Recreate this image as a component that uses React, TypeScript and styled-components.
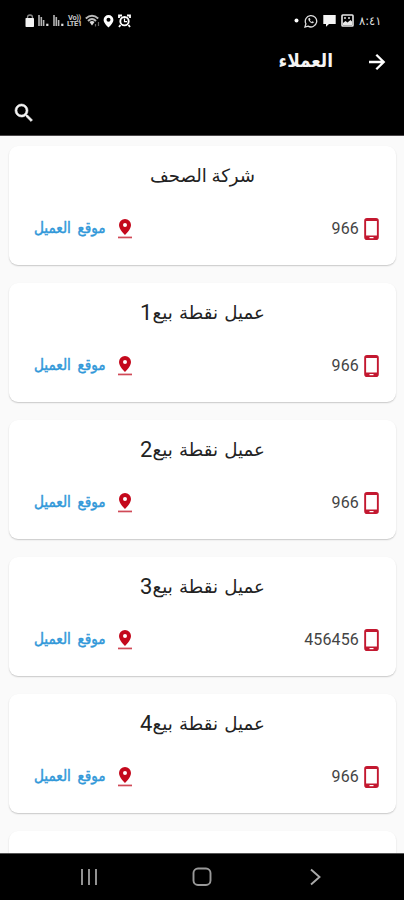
import React from "react";
import styled, { createGlobalStyle } from "styled-components";

const GlobalStyle = createGlobalStyle`
  * { box-sizing: border-box; }
  body { margin: 0; background: #fafafa; overflow: hidden; }
`;

const Screen = styled.div`
  direction: rtl;
  width: 404px;
  height: 900px;
  display: flex;
  flex-direction: column;
  overflow: hidden;
  background: #fafafa;
  font-family: Roboto, "DejaVu Sans", sans-serif;
`;

const Header = styled.header`
  flex: none;
  height: 136px;
  background: #000;
  color: #f4f4f4;
  border-bottom: 1px solid #4b484a;
`;

const StatusBar = styled.div`
  direction: ltr;
  height: 40px;
  padding: 1px 24px 0 25px;
  display: flex;
  align-items: center;
  justify-content: space-between;
`;

const StatusGroup = styled.div<{ $gap: number }>`
  display: flex;
  align-items: center;
  gap: ${(p) => p.$gap}px;
  svg { display: block; }
`;

const Network = styled.div`
  width: 15px;
  font-size: 7.5px;
  line-height: 6px;
  font-weight: 700;
  text-align: center;
  letter-spacing: -0.4px;
  color: #c8c8c8;
`;

const Clock = styled.span`
  width: 21px;
  font-family: "DejaVu Sans", sans-serif;
  font-size: 11.5px;
  line-height: 14px;
  letter-spacing: -0.8px;
  direction: ltr;
  unicode-bidi: bidi-override;
  white-space: nowrap;
  color: #ddd;
`;

const TitleBar = styled.div`
  height: 44px;
  padding-right: 18px;
  display: flex;
  align-items: center;
  gap: 35px;
  svg { display: block; }
`;

const PageTitle = styled.h1`
  margin: 0;
  padding-bottom: 2px;
  font-family: "DejaVu Sans Condensed", "DejaVu Sans", sans-serif;
  font-size: 18.8px;
  line-height: 24px;
  font-weight: 700;
  white-space: nowrap;
`;

const SearchBar = styled.div`
  height: 51px;
  padding: 17px 0 0 12px;
  display: flex;
  justify-content: flex-end;
`;

const List = styled.main`
  flex: 1;
  min-height: 0;
  overflow: hidden;
  padding: 10px 8px 0 9px;
  display: flex;
  flex-direction: column;
  gap: 18px;
`;

const Card = styled.article`
  flex: none;
  height: 119px;
  padding: 16px 17px 0 25px;
  border-radius: 9px;
  background: #fff;
  box-shadow: 0 1px 1.5px rgba(0, 0, 0, 0.2);
`;

const CustomerName = styled.h2`
  margin: 0;
  height: 28px;
  padding-right: 8px;
  display: flex;
  justify-content: center;
  align-items: center;
  font-size: 18.2px;
  line-height: 28px;
  font-weight: 400;
  white-space: pre;
  color: #222;

  ${Card}:last-child & {
    padding-bottom: 1px;
    line-height: 27px;
  }
`;

const NameText = styled.span<{ $numbered: boolean }>`
  word-spacing: ${(p) => (p.$numbered ? 1.8 : 0)}px;
`;

const Digit = styled.span`
  font-size: 22px;
`;

const CardRow = styled.div`
  height: 24px;
  margin-top: 27px;
  display: flex;
  align-items: center;
  justify-content: space-between;
`;

const Phone = styled.div`
  display: flex;
  align-items: center;
  gap: 5px;
  font-size: 16px;
  letter-spacing: 0.15px;
  color: #444;
  svg { display: block; }
`;

const PhoneNumber = styled.span`
  padding-bottom: 2px;
`;

const LocationLink = styled.a`
  display: flex;
  align-items: center;
  gap: 12.5px;
  font-family: "DejaVu Sans Condensed", "DejaVu Sans", sans-serif;
  font-size: 15.2px;
  word-spacing: 2.2px;
  line-height: 20px;
  white-space: nowrap;
  color: #3198d9;
  -webkit-text-stroke: 0.45px #3198d9;
  svg { display: block; }
`;

const LinkText = styled.span`
  padding-bottom: 2px;
`;

const NavBar = styled.nav`
  direction: ltr;
  flex: none;
  height: 47px;
  border-top: 1px solid #555;
  background: #000;
  display: flex;
  align-items: center;
  justify-content: space-between;
  padding: 0 81px 0 80px;
  svg { display: block; }
`;

const HomeButton = styled.span`
  margin-right: 3px;
`;

const LockIcon = () => (
  <svg width="10" height="14" viewBox="0 0 10 14">
    <path d="M2.500 5V3.500a2.500 2.500 0 0 1 5 0V5" fill="none" stroke="#888" strokeWidth="1.3" />
    <rect x="0.5" y="4" width="8.5" height="9" rx="0.8" fill="#f3f3f3" />
  </svg>
);

const SignalIcon = () => (
  <svg width="11" height="13" viewBox="0 0 11 13">
    <path d="M1 1v11M3.300 3v9M5.600 6v6" stroke="#b5b5b5" strokeWidth="1.6" />
    <rect x="8.200" y="9.700" width="2.200" height="2.300" fill="#ddd" />
  </svg>
);

const WifiIcon = () => (
  <svg width="15" height="14" viewBox="0 0 15 14">
    <path d="M.8 4.500Q7 -1 13.200 4.500M3 7Q7 3 11 7" fill="none" stroke="#bbb" strokeWidth="1.900" />
    <path d="M4.500 8Q7 6 9.500 8L7 11.500z" fill="#ddd" />
    <path d="M10.500 12.500V10M13.500 8v4" stroke="#666" strokeWidth="1.2" />
  </svg>
);

const StatusPinIcon = () => (
  <svg width="11" height="14" viewBox="0 0 11 14">
    <path fillRule="evenodd" d="M5.500 1a4.900 4.900 0 0 0-4.900 4.900C.6 9 5.500 13.400 5.500 13.400S10.400 9 10.400 5.900A4.900 4.900 0 0 0 5.500 1zm0 2.800a2 2 0 1 1 0 4 2 2 0 0 1 0-4z" fill="#fff" />
  </svg>
);

const AlarmIcon = () => (
  <svg width="13" height="14" viewBox="0 0 13 14">
    <path d="M1 4V1.500h3M9 1.500h3V4M2.500 11L1 13M10.500 11l1.500 2" stroke="#fff" strokeWidth="1.800" fill="none" />
    <circle cx="6.500" cy="7.200" r="4.200" fill="none" stroke="#fff" strokeWidth="1.900" />
    <path d="M6.500 4.500V7.600H9" stroke="#fff" fill="none" strokeWidth="1.200" />
  </svg>
);

const WhatsappIcon = () => (
  <svg width="14" height="14" viewBox="0 0 14 14">
    <path d="M1 13l.9-3.200A5.700 5.700 0 1 1 4 12.100z" fill="none" stroke="#ddd" strokeWidth="1.300" />
    <path d="M4.800 4c-.8.8-.5 2.300.9 3.800 1.500 1.500 3.100 1.900 3.900 1l.3-.8-1.600-.8-.8.7C6.700 7.500 6.200 7 5.900 6.300l.6-.7L5.800 4z" fill="#ddd" />
  </svg>
);

const ChatIcon = () => (
  <svg width="13" height="13" viewBox="0 0 13 13">
    <path d="M.3 1h12.400v9H6L3 12.800V10H.3z" fill="#f5f5f5" />
  </svg>
);

const GalleryIcon = () => (
  <svg width="13" height="13" viewBox="0 0 13 13">
    <rect x="1" y="1" width="11" height="11" rx="0.8" fill="none" stroke="#e8e8e8" strokeWidth="1.600" />
    <path d="M2 9l2.500-2 2 1.500L9.500 6 11 7.500V11H2z" fill="#e8e8e8" />
    <path d="M3 4h2M7 4h2" stroke="#ddd" strokeWidth="1.400" />
  </svg>
);

const ArrowIcon = () => (
  <svg width="18" height="18" viewBox="0 0 18 18">
    <path d="M1 9h14.500M8.300 1.800L15.700 9l-7.400 7.200" fill="none" stroke="#fff" strokeWidth="2.300" />
  </svg>
);

const SearchIcon = () => (
  <svg width="24" height="24" viewBox="0 0 24 24">
    <path fill="#f4f4f4" stroke="#f4f4f4" strokeWidth="0.600" d="M15.500 14h-.79l-.28-.27A6.471 6.471 0 0 0 16 9.500 6.500 6.500 0 1 0 9.500 16c1.610 0 3.090-.59 4.230-1.570l.27.28v.79l5 4.990L20.490 19l-4.990-5zm-6 0C7.010 14 5 11.990 5 9.500S7.010 5 9.500 5 14 7.010 14 9.500 11.990 14 9.500 14z" />
  </svg>
);

const PhoneIcon = () => (
  <svg width="15" height="22" viewBox="0 0 15 22">
    <path fillRule="evenodd" fill="#c31830" d="M3 0h9a2.800 2.800 0 0 1 2.800 2.800v16.400A2.800 2.800 0 0 1 12 22H3a2.800 2.800 0 0 1-2.800-2.800V2.800A2.800 2.800 0 0 1 3 0zM2.100 3v14.600h10.800V3z" />
    <rect x="5.500" y="19" width="4" height="1.200" fill="#fff" />
  </svg>
);

const PinIcon = () => (
  <svg width="14" height="20" viewBox="0 0 14 20">
    <path fillRule="evenodd" fill="#c4081c" d="M7 0a6 6 0 0 0-6 6c0 4.500 6 10 6 10s6-5.500 6-10a6 6 0 0 0-6-6zm0 3.900a2 2 0 1 1 0 4 2 2 0 0 1 0-4z" />
    <rect x="0" y="17.600" width="14" height="1.700" fill="#d04a57" />
  </svg>
);

interface Customer {
  name: string;
  digit?: string;
  phone: string;
}

const customers: Customer[] = [
  { name: "شركة الصحف", phone: "966" },
  { name: "عميل نقطة بيع", digit: "1", phone: "966" },
  { name: "عميل نقطة بيع", digit: "2", phone: "966" },
  { name: "عميل نقطة بيع", digit: "3", phone: "456456" },
  { name: "عميل نقطة بيع", digit: "4", phone: "966" },
  { name: "عميل توصيلات", phone: "966" },
];

const CustomerCard = ({ name, digit, phone }: Customer) => (
  <Card>
    <CustomerName>
      <NameText $numbered={!!digit}>{name}</NameText>
      {digit && <Digit>{digit}</Digit>}
    </CustomerName>
    <CardRow>
      <Phone>
        <PhoneIcon />
        <PhoneNumber>{phone}</PhoneNumber>
      </Phone>
      <LocationLink>
        <PinIcon />
        <LinkText>موقع العميل</LinkText>
      </LocationLink>
    </CardRow>
  </Card>
);

export default function App() {
  return (
    <Screen>
      <GlobalStyle />
      <Header>
        <StatusBar>
          <StatusGroup $gap={3.3}>
            <LockIcon />
            <SignalIcon />
            <SignalIcon />
            <Network>Vo)) LTE1</Network>
            <WifiIcon />
            <StatusPinIcon />
            <AlarmIcon />
          </StatusGroup>
          <StatusGroup $gap={5}>
            <svg width="5" height="5" viewBox="0 0 5 5"><circle cx="2.500" cy="2.500" r="2" fill="#fff" /></svg>
            <WhatsappIcon />
            <ChatIcon />
            <GalleryIcon />
            <Clock>٨:٤١</Clock>
          </StatusGroup>
        </StatusBar>
        <TitleBar>
          <ArrowIcon />
          <PageTitle>العملاء</PageTitle>
        </TitleBar>
        <SearchBar>
          <SearchIcon />
        </SearchBar>
      </Header>
      <List>
        {customers.map((c, i) => (
          <CustomerCard key={i} {...c} />
        ))}
      </List>
      <NavBar>
        <svg width="18" height="18" viewBox="0 0 18 18">
          <path d="M2 1v16M9 1v16M16 1v16" stroke="#999" strokeWidth="1.900" />
        </svg>
        <HomeButton>
          <svg width="20" height="20" viewBox="0 0 20 20">
            <rect x="1.500" y="1.500" width="17" height="16.500" rx="4.500" fill="none" stroke="#999" strokeWidth="1.900" />
          </svg>
        </HomeButton>
        <svg width="14" height="18" viewBox="0 0 14 18">
          <path d="M2 1.500L10.500 9l-8.500 7.500" fill="none" stroke="#aaa" strokeWidth="1.900" />
        </svg>
      </NavBar>
    </Screen>
  );
}
